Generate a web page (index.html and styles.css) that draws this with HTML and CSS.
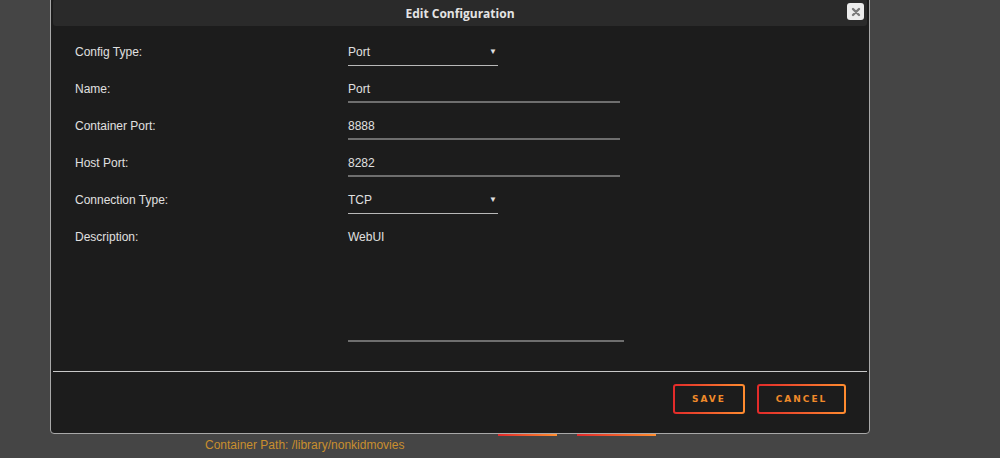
FILE: index.html
```html
<!DOCTYPE html>
<html lang="en">
<head>
    <meta charset="UTF-8">
    <title>Edit Configuration</title>
    <link rel="stylesheet" href="styles.css">
</head>
<body>
    <div class="page">
        <div class="bg-row">
            <div class="bg-input"></div>
            <div class="bg-button small"></div>
            <div class="bg-button large"></div>
        </div>
        <p class="bg-note">Container Path: /library/nonkidmovies</p>
    </div>

    <div class="dialog">
        <div class="dialog-header">
            <span class="dialog-title">Edit Configuration</span>
            <button class="close-btn" aria-label="Close">
                <svg width="10" height="10" viewBox="0 0 10 10"><path d="M2 2 L8 8 M8 2 L2 8" stroke="#7a7a7a" stroke-width="2.4" stroke-linecap="round"/></svg>
            </button>
        </div>

        <div class="dialog-body">
            <div class="field-row">
                <label>Config Type:</label>
                <div class="select"><span>Port</span><span class="caret">&#9660;</span></div>
            </div>
            <div class="field-row">
                <label>Name:</label>
                <div class="text-input">Port</div>
            </div>
            <div class="field-row">
                <label>Container Port:</label>
                <div class="text-input">8888</div>
            </div>
            <div class="field-row">
                <label>Host Port:</label>
                <div class="text-input">8282</div>
            </div>
            <div class="field-row">
                <label>Connection Type:</label>
                <div class="select"><span>TCP</span><span class="caret">&#9660;</span></div>
            </div>
            <div class="field-row">
                <label>Description:</label>
                <div class="textarea">WebUI</div>
            </div>
        </div>

        <div class="dialog-footer">
            <button class="btn save">SAVE</button>
            <button class="btn cancel">CANCEL</button>
        </div>
    </div>
</body>
</html>
```

FILE: styles.css
```css
* {
    margin: 0;
    padding: 0;
    box-sizing: border-box;
}

body {
    font-family: "Liberation Sans", Arial, sans-serif;
    background: #454545;
    color: #e0e0e0;
    width: 1000px;
    height: 458px;
    overflow: hidden;
    position: relative;
}

/* page content behind the modal */
.page {
    padding: 404px 0 0 205px;
}

.bg-row {
    display: flex;
    align-items: flex-end;
    height: 32px;
}

.bg-input {
    width: 270px;
    height: 30px;
    border-bottom: 2px solid #8a8a8a;
    margin-bottom: 3px;
}

.bg-button {
    height: 32px;
    border: 2px solid #e55a2b;
    border-radius: 3px;
    border-image: linear-gradient(90deg, #e22a2a, #ff8c2f) 1;
}

.bg-button.small {
    width: 59px;
    margin-left: 23px;
}

.bg-button.large {
    width: 79px;
    margin-left: 20px;
}

.bg-note {
    margin-top: 1px;
    font-size: 12px;
    color: #c98f2e;
    line-height: 16px;
}

/* modal */
.dialog {
    position: absolute;
    left: 50px;
    top: -4px;
    width: 820px;
    height: 438px;
    background: #1c1c1c;
    border: 1px solid #a8a8a8;
    border-radius: 4px;
    padding: 2px;
    display: flex;
    flex-direction: column;
}

.dialog-header {
    height: 27px;
    background: #2a2a2a;
    border-radius: 3px;
    position: relative;
    display: flex;
    align-items: center;
    justify-content: center;
    padding-top: 1px;
}

.dialog-title {
    font-family: "Open Sans", sans-serif;
    font-weight: 700;
    font-size: 12px;
    color: #e4e4e4;
}

.close-btn {
    position: absolute;
    right: 3px;
    top: 4px;
    width: 17px;
    height: 17px;
    border: none;
    border-radius: 3px;
    background: #ececec;
    display: flex;
    align-items: center;
    justify-content: center;
}

.dialog-body {
    padding: 15px 0 0 22px;
    display: flex;
    flex-direction: column;
    gap: 12px;
}

.field-row {
    display: grid;
    grid-template-columns: 273px 1fr;
    align-items: start;
}

.field-row label {
    font-size: 12px;
    color: #e0e0e0;
    line-height: 22px;
}

.select,
.text-input,
.textarea {
    font-size: 12px;
    color: #e0e0e0;
    line-height: 22px;
    height: 25px;
}

.select {
    width: 150px;
    border-bottom: 1px solid #b8b8b8;
    display: flex;
    justify-content: space-between;
    padding-right: 1px;
}

.caret {
    font-size: 8px;
}

.text-input {
    width: 272px;
    border-bottom: 2px solid #6e6e6e;
}

.textarea {
    width: 276px;
    height: 116px;
    border-bottom: 2px solid #6e6e6e;
}

.dialog-footer {
    margin-top: auto;
    border-top: 1px solid #c8c8c8;
    height: 60px;
    display: flex;
    justify-content: flex-end;
    align-items: flex-start;
    padding: 12px 21px 0 0;
    gap: 12px;
}

.btn {
    height: 30px;
    border: 2px solid transparent;
    border-radius: 3px;
    background: linear-gradient(#1c1c1c, #1c1c1c) padding-box,
                linear-gradient(90deg, #e22a2a, #ff8c2f) border-box;
    color: #f08a2a;
    font-family: "DejaVu Sans", sans-serif;
    font-weight: 700;
    font-size: 9px;
    letter-spacing: 2px;
}

.btn.save {
    width: 72px;
}

.btn.cancel {
    width: 89px;
}
```
